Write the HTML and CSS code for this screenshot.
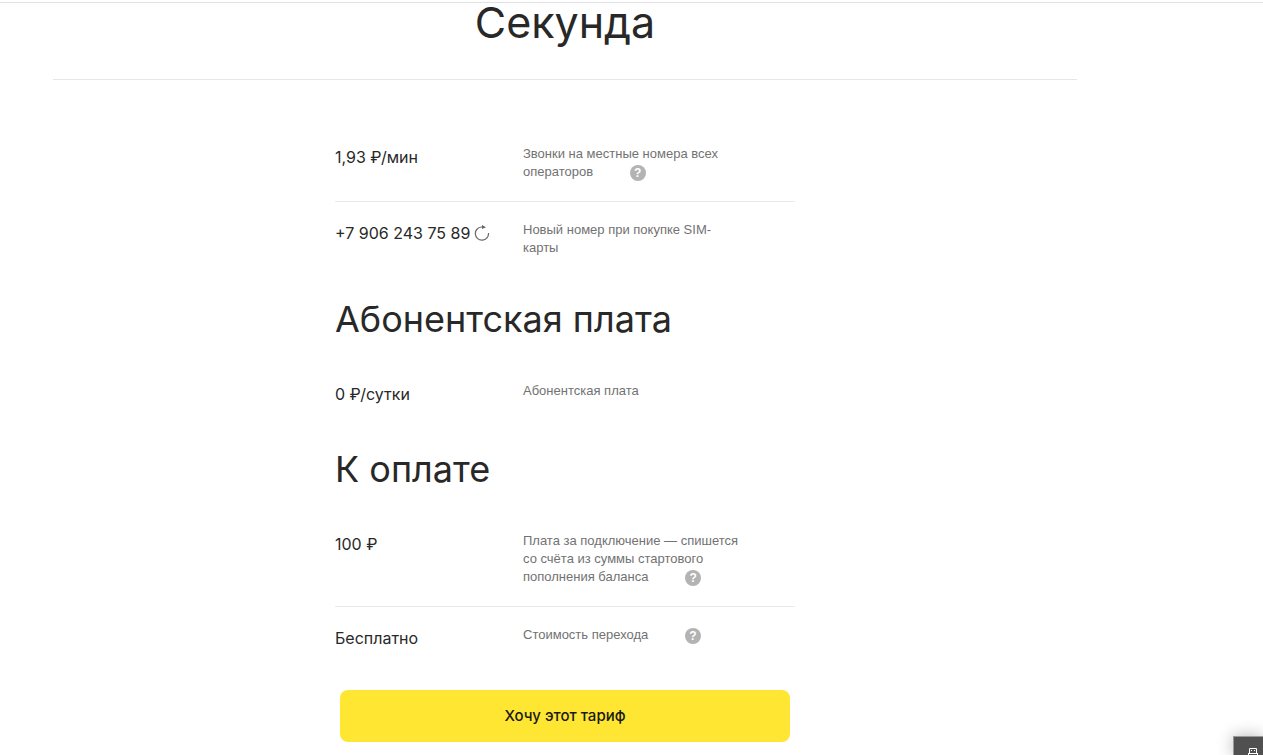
FILE: index.html
```
<!DOCTYPE html>
<html lang="ru">
  <head>
    <meta charset="UTF-8" />
    <meta name="viewport" content="width=device-width, initial-scale=1.0" />
    <title>Секунда</title>
    <link rel="stylesheet" href="styles.css">
  </head>
  <body>
    <main class="page">
      <h1 class="title">Секунда</h1>

      <div class="tariff">
        <dl class="params">
          <div class="row">
            <dt class="value">1,93 ₽/мин</dt>
            <dd class="desc">Звонки на местные номера всех операторов
              <button class="help" type="button" aria-label="Подсказка">?</button>
            </dd>
          </div>
          <div class="row">
            <dt class="value">+7 906 243 75 89
              <button class="refresh" type="button" aria-label="Другой номер">
                <svg width="16" height="16" viewBox="0 0 16 16">
                  <path d="M10 2H7.5a6.6 6.6 0 1 0 7 6" fill="none" stroke="#666" stroke-width="1.2" />
                  <path d="M8 0L12 2.2L8 4z" fill="#666" />
                </svg>
              </button>
            </dt>
            <dd class="desc">Новый номер при покупке SIM-карты</dd>
          </div>
        </dl>

        <h2 class="subtitle">Абонентская плата</h2>
        <dl class="params">
          <div class="row">
            <dt class="value">0 ₽/сутки</dt>
            <dd class="desc">Абонентская плата</dd>
          </div>
        </dl>

        <h2 class="subtitle">К оплате</h2>
        <dl class="params">
          <div class="row">
            <dt class="value">100 ₽</dt>
            <dd class="desc">Плата за подключение — спишется со счёта из суммы стартового пополнения баланса
              <button class="help" type="button" aria-label="Подсказка">?</button>
            </dd>
          </div>
          <div class="row">
            <dt class="value">Бесплатно</dt>
            <dd class="desc">Стоимость перехода
              <button class="help" type="button" aria-label="Подсказка">?</button>
            </dd>
          </div>
        </dl>

        <button class="order" type="button">Хочу этот тариф</button>
      </div>
    </main>

    <div class="device">
      <svg width="10" height="7" viewBox="0 0 10 7">
        <path d="M1.5 5V.5h7V5M0 5.5h10M.5 5v2M9.5 5v2" fill="none" stroke="#fff" />
        <path d="M3 2h1v1H3zM6 2h1v1H6z" fill="#fff" />
      </svg>
    </div>
  </body>
</html>
```
FILE: styles.css
```
body {
  margin: 0;
  padding-top: 2px;
  background-color: #fff;
  color: #282828;
  font-family: Inter, "Liberation Sans", sans-serif;
}

button {
  padding: 0;
  border: none;
  cursor: pointer;
}

.page {
  border-top: 1px solid #e0e0e6;
  padding: 0 186px 0 53px;
}

.title {
  margin: 0;
  padding-bottom: 38px;
  border-bottom: 1px solid #e6e6e6;
  font-size: 43px;
  font-weight: 400;
  line-height: 38px;
  text-align: center;
}

.tariff {
  max-width: 460px;
  margin: 0 auto;
  padding-top: 46px;
}

.params {
  margin: 0;
}

.row {
  display: grid;
  grid-template-columns: 188px 220px;
  padding: 19px 0 20px;
}

.row + .row {
  border-top: 1px solid #ebebe6;
}

.value {
  display: flex;
  align-items: center;
  gap: 4px;
  height: 24px;
  padding-bottom: 1px;
  font-size: 16px;
  line-height: 24px;
  white-space: nowrap;
}

.desc {
  margin: 0;
  color: #727272;
  font-family: "Liberation Sans", Arial, sans-serif;
  font-size: 13px;
  line-height: 18px;
}

.help {
  width: 16px;
  height: 16px;
  margin: -2px 0 -2px 33px;
  border-radius: 50%;
  background-color: #b3b3b3;
  color: #fff;
  font-family: "Liberation Sans", Arial, sans-serif;
  font-size: 12px;
  font-weight: bold;
  line-height: 16px;
  vertical-align: middle;
}

.refresh {
  display: flex;
  background: none;
}

.subtitle {
  margin: 18px 0 20px;
  font-size: 36px;
  font-weight: 400;
  line-height: 48px;
}

.order {
  display: block;
  width: calc(100% - 10px);
  height: 52px;
  margin: 19px auto 0;
  padding-bottom: 2px;
  border-radius: 8px;
  background-color: #ffe632;
  color: #191919;
  font-family: Inter, "Liberation Sans", sans-serif;
  font-size: 15px;
  font-weight: 500;
}

.device {
  position: fixed;
  right: 0;
  bottom: 0;
  display: flex;
  justify-content: flex-end;
  align-items: flex-end;
  box-sizing: border-box;
  width: 30px;
  height: 19px;
  padding-right: 5px;
  border: solid #999;
  border-width: 1px 0 0 1px;
  background-color: #505050;
  box-shadow: 0 0 16px rgba(0, 0, 0, 0.3);
}
```
